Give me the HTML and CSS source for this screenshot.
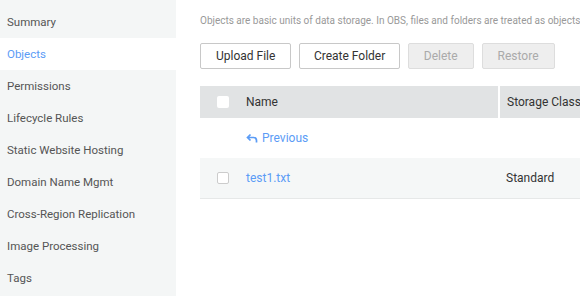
FILE: index.html
```html
<!DOCTYPE html>
<html lang="en">
<head>
  <meta charset="UTF-8">
  <title>Objects</title>
  <link rel="stylesheet" href="styles.css">
</head>
<body>

  <div class="sidebar">
    <div class="nav-item">Summary</div>
    <div class="nav-item active">Objects</div>
    <div class="nav-item">Permissions</div>
    <div class="nav-item">Lifecycle Rules</div>
    <div class="nav-item">Static Website Hosting</div>
    <div class="nav-item">Domain Name Mgmt</div>
    <div class="nav-item">Cross-Region Replication</div>
    <div class="nav-item">Image Processing</div>
    <div class="nav-item">Tags</div>
  </div>

  <div class="main">
    <p class="desc">Objects are basic units of data storage. In OBS, files and folders are treated as objects. You can upload files of any type.</p>

    <div class="toolbar">
      <button class="btn">Upload File</button>
      <button class="btn wide">Create Folder</button>
      <button class="btn" disabled>Delete</button>
      <button class="btn" disabled>Restore</button>
    </div>

    <table class="objects">
      <thead>
        <tr>
          <th class="col-check"><span class="check"></span></th>
          <th class="col-name">Name</th>
          <th class="col-class">Storage Class</th>
        </tr>
      </thead>
      <tbody>
        <tr class="row-prev">
          <td></td>
          <td>
            <a class="link prev">
              <svg width="12" height="12" viewBox="0 0 12 12">
                <path d="M4.5 2.5 L1.5 5.5 L4.5 8.5 M1.5 5.5 H7.5 Q10.5 5.5 10.5 8.5 V10.5" fill="none" stroke="#5b9cf6" stroke-width="1.7"/>
              </svg>
              Previous
            </a>
          </td>
          <td></td>
        </tr>
        <tr class="row-file">
          <td class="col-check"><span class="check bordered"></span></td>
          <td><a class="link">test1.txt</a></td>
          <td>Standard</td>
        </tr>
      </tbody>
    </table>
  </div>

</body>
</html>
```

FILE: styles.css
```css
  body {
    margin: 0;
    font-family: Roboto, sans-serif;
    background-color: #ffffff;
    color: #333;
    display: flex;
    height: 296px;
    overflow: hidden;
  }

  .sidebar {
    width: 176px;
    flex-shrink: 0;
    background-color: #f4f6f6;
    padding-top: 6px;
  }
  .nav-item {
    height: 32px;
    line-height: 32px;
    padding-left: 7px;
    font-size: 11.5px;
    color: #555;
  }
  .nav-item.active {
    background-color: #ffffff;
    color: #5b9cf6;
  }

  .main {
    flex: 1;
    padding-left: 24px;
    overflow: hidden;
  }
  .desc {
    margin: 14px 0 0;
    font-size: 10px;
    line-height: 14px;
    color: #999;
    white-space: nowrap;
  }

  .toolbar {
    display: flex;
    gap: 8px;
    margin-top: 15px;
  }
  .btn {
    height: 26px;
    padding: 0 15px;
    border: 1px solid #c8c8c8;
    border-radius: 2px;
    background-color: #ffffff;
    color: #333;
    font-family: Roboto, sans-serif;
    font-size: 12px;
  }
  .btn.wide {
    padding: 0 13.5px;
  }
  .btn:disabled {
    background-color: #eeeeee;
    border-color: #dddddd;
    color: #aaa;
  }

  .objects {
    margin-top: 17px;
    width: 520px;
    border-collapse: collapse;
    font-size: 12px;
  }
  .objects th {
    height: 32px;
    background-color: #e1e3e4;
    font-weight: normal;
    text-align: left;
    color: #333;
    padding: 0;
  }
  .objects td {
    height: 40px;
    padding: 0;
    color: #333;
  }
  .col-check {
    width: 46px;
    padding-left: 17px !important;
    box-sizing: border-box;
  }
  .col-name {
    width: 252px;
  }
  .col-class {
    padding-left: 7px !important;
    border-left: 2px solid #ffffff;
  }
  .row-file td {
    background-color: #f5f7f7;
    border-bottom: 1px solid #e6e8e8;
  }
  .row-file td:last-child {
    padding-left: 7px;
  }

  .check {
    display: block;
    width: 12px;
    height: 12px;
    background-color: #ffffff;
    border-radius: 2px;
  }
  .check.bordered {
    box-sizing: border-box;
    border: 1px solid #cccccc;
  }

  .link {
    color: #5b9cf6;
  }
  .prev {
    display: flex;
    align-items: center;
    gap: 4px;
  }
```
